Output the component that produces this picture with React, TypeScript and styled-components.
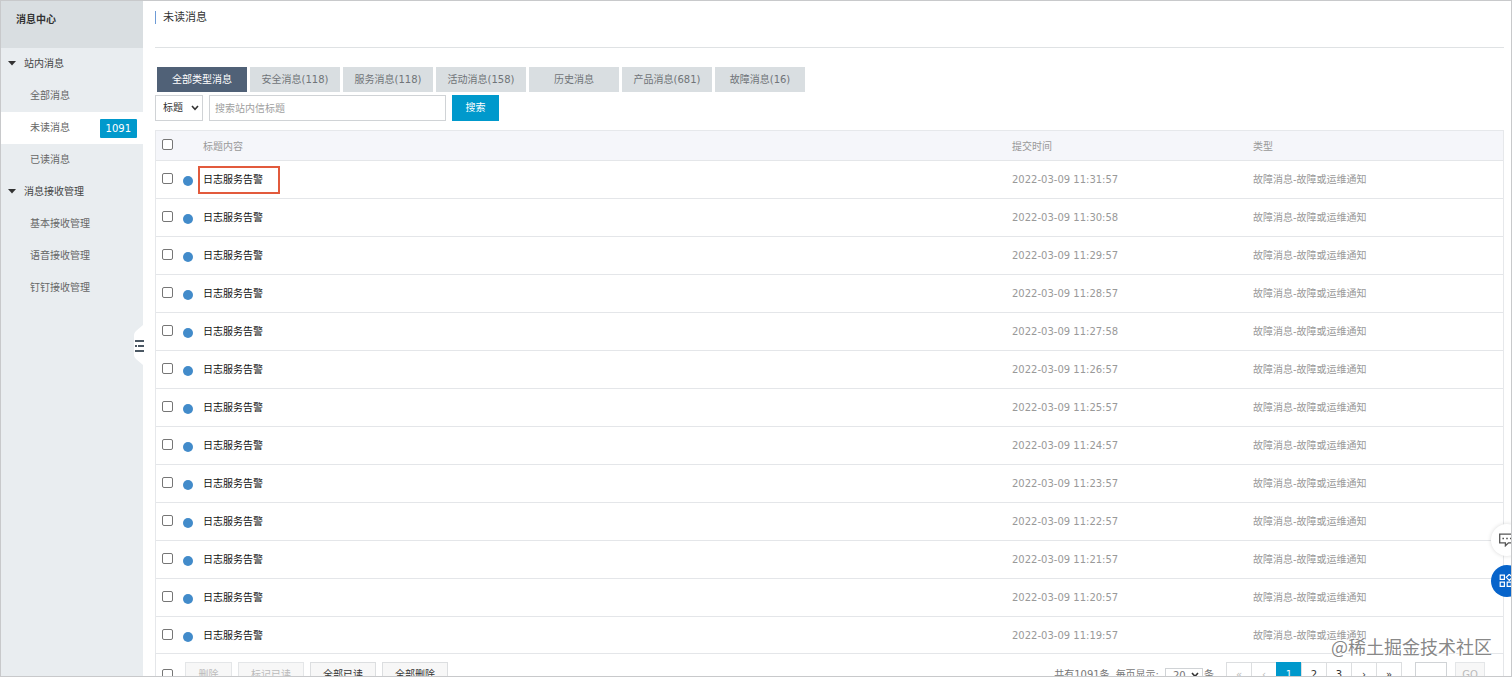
import React from 'react';
import styled, { createGlobalStyle } from 'styled-components';

const GlobalStyle = createGlobalStyle`
  * { box-sizing: border-box; }
  body {
    margin: 0;
    background: #fff;
    color: #333;
    font-family: "DejaVu Sans", "Noto Sans CJK SC", sans-serif;
    font-size: 10px;
    line-height: 16px;
  }
  button, input, select { font: inherit; color: inherit; margin: 0; border-radius: 0; }
`;

const Page = styled.div`
  display: flex;
  height: 100vh;
  border: 1px solid #c8c9cb;
  overflow: hidden;
  position: relative;
`;

const Sidebar = styled.aside`
  position: relative;
  flex: 0 0 142px;
  background: #e9edf0;
`;

const SidebarTitle = styled.h1`
  margin: 0;
  height: 47px;
  padding: 11px 15px;
  font-size: 10px;
  line-height: 16px;
  font-weight: 700;
  background: #d9dee1;
`;

const NavGroup = styled.button`
  display: flex;
  align-items: center;
  gap: 8px;
  width: 100%;
  height: 32px;
  padding: 0 0 0 7px;
  border: 0;
  background: none;
  color: #444;
  text-align: left;
`;

const NavItem = styled.a<{ $active?: boolean }>`
  display: flex;
  align-items: center;
  justify-content: space-between;
  height: 32px;
  padding: 0 6px 0 29px;
  color: #666;
  text-decoration: none;
  background: ${p => (p.$active ? '#fff' : 'transparent')};
`;

const Badge = styled.span`
  padding: 0 6px;
  line-height: 19px;
  border-radius: 1px;
  color: #fff;
  background: #0099cc;
`;

const Handle = styled.button`
  position: absolute;
  right: -2px;
  top: 324px;
  width: 11px;
  height: 40px;
  padding: 0;
  border: 0;
  background: none;
  svg { display: block; }
`;

const Main = styled.main`
  flex: 1;
  min-width: 0;
  display: flex;
  flex-direction: column;
  padding: 0 7px 0 12px;
`;

const Heading = styled.header`
  flex: 0 0 47px;
  padding-top: 10px;
  border-bottom: 1px solid #dfe2e4;
  h2 {
    margin: 0;
    padding-left: 7px;
    border-left: 1px solid #6d9bd6;
    font-size: 11px;
    line-height: 13px;
    font-weight: 400;
  }
`;

const Tabs = styled.nav`
  display: flex;
  gap: 3px;
  padding: 19px 0 0 2px;
`;

const Tab = styled.button<{ $active?: boolean }>`
  width: 90px;
  height: 25px;
  padding: 0;
  border: 0;
  white-space: nowrap;
  color: ${p => (p.$active ? '#fff' : '#707478')};
  background: ${p => (p.$active ? '#506177' : '#d9dee1')};
`;

const SearchForm = styled.form`
  display: flex;
  gap: 6px;
  padding: 3px 0 9px;
`;

const SelectBox = styled.span<{ $w: number; $h: number }>`
  position: relative;
  display: inline-block;
  width: ${p => p.$w}px;
  height: ${p => p.$h}px;
  select {
    display: block;
    appearance: none;
    width: 100%;
    height: 100%;
    padding: 0 0 0 7px;
    border: 1px solid #d0d3d6;
    background: #fff;
    line-height: 14px;
  }
  svg {
    position: absolute;
    right: 4px;
    top: calc(50% - 3px);
    pointer-events: none;
  }
`;

const SearchInput = styled.input`
  width: 237px;
  height: 26px;
  padding: 0 5px;
  border: 1px solid #d0d3d6;
  &::placeholder { color: #a0a0a0; }
`;

const SearchButton = styled.button`
  width: 47px;
  height: 26px;
  padding: 0;
  border: 0;
  color: #fff;
  background: #0099cc;
`;

const List = styled.div`
  flex: 1;
  min-height: 0;
  overflow: hidden;
  border: 1px solid #e6e8eb;
  border-bottom: 0;
`;

const Table = styled.table`
  width: 100%;
  border-collapse: separate;
  border-spacing: 0;
  table-layout: fixed;
  th, td {
    padding: 0;
    text-align: left;
    font-weight: 400;
    color: #999;
    vertical-align: middle;
    border-bottom: 1px solid #e4e6e9;
  }
  th { height: 30px; padding-top: 2px; background: #f5f6fa; }
  th:first-child { padding: 0 0 2px; }
  td { height: 38px; }
  td:first-child { padding-bottom: 2px; }
`;

const Col = styled.col<{ $w?: number }>`
  width: ${p => (p.$w ? `${p.$w}px` : 'auto')};
`;

const Check = styled.input.attrs({ type: 'checkbox' })`
  appearance: none;
  display: block;
  flex: none;
  width: 11px;
  height: 11px;
  margin-left: 6px;
  border: 1px solid #767676;
  border-radius: 2px;
  background: #fff;
  &:checked { background: #0099cc; }
`;

const Dot = styled.span`
  display: block;
  width: 10px;
  height: 10px;
  margin-top: 2px;
  border-radius: 50%;
  background: #428bca;
`;

const MessageLink = styled.a`
  position: relative;
  color: #111;
  text-decoration: none;
`;

const Highlight = styled.span`
  position: absolute;
  left: -5px;
  top: -8px;
  width: 82px;
  height: 28px;
  border: 2px solid #e25a3c;
`;

const Footer = styled.footer`
  flex: 0 0 23px;
  display: flex;
  align-items: flex-start;
  justify-content: space-between;
  padding: 8px 18px 0 0;
  border: 1px solid #e4e6e9;
  border-bottom: 0;
  overflow: hidden;
  white-space: nowrap;
`;

const FooterGroup = styled.div`
  display: flex;
  align-items: center;
  gap: 6px;
  height: 25px;
  color: #777;
`;

const ActionButton = styled.button<{ $w: number }>`
  width: ${p => p.$w}px;
  height: 25px;
  padding: 0;
  border: 1px solid #dcdee0;
  background: #f7f7f7;
  color: #333;
  &:disabled { color: #bbb; border-color: #e4e6e8; }
  ${Check} + & { margin-left: 6px; }
`;

const PageSize = styled.span`
  display: flex;
  align-items: center;
  gap: 1px;
`;

const Pager = styled.div`
  display: flex;
  margin: 0 8px 0 6px;
`;

const PageButton = styled.button<{ $active?: boolean }>`
  width: 26px;
  height: 25px;
  padding: 0;
  margin-right: -1px;
  border: 1px solid ${p => (p.$active ? '#0099cc' : '#dcdee0')};
  color: ${p => (p.$active ? '#fff' : '#333')};
  background: ${p => (p.$active ? '#0099cc' : '#fff')};
  &:disabled { color: #bbb; }
`;

const PageInput = styled.input`
  width: 32px;
  height: 25px;
  margin-right: 2px;
  border: 1px solid #d0d3d6;
`;

const FloatButton = styled.button<{ $top: number; $primary?: boolean }>`
  position: absolute;
  top: ${p => p.$top}px;
  right: -12px;
  width: 32px;
  height: 32px;
  padding: 0;
  border: 0;
  border-radius: 50%;
  background: ${p => (p.$primary ? '#0764cb' : '#fff')};
  box-shadow: ${p => (p.$primary ? 'none' : '0 0 4px rgba(0, 0, 0, 0.15)')};
  svg { display: block; margin: 9px 8px; }
`;

const Watermark = styled.div`
  position: absolute;
  right: 19px;
  bottom: 18px;
  font-family: "Noto Sans CJK SC", sans-serif;
  font-size: 18px;
  line-height: 24px;
  color: rgba(120, 120, 120, 0.9);
  text-shadow: 1px 1px 0 #fff, -1px -1px 0 #fff;
  pointer-events: none;
`;

const Caret = () => (
  <svg width="8" height="7" viewBox="0 0 8 7" aria-hidden="true">
    <path d="M0 0h8L4 4.5z" fill="#333" />
  </svg>
);

const Chevron = () => (
  <svg width="8" height="6" viewBox="0 0 8 6" aria-hidden="true">
    <path d="M1 1l3 3.3L7 1" fill="none" stroke="#333" strokeWidth="1.6" />
  </svg>
);

const tabs = ['全部类型消息', '安全消息(118)', '服务消息(118)', '活动消息(158)', '历史消息', '产品消息(681)', '故障消息(16)'];

const times = [
  '11:31:57', '11:30:58', '11:29:57', '11:28:57', '11:27:58', '11:26:57', '11:25:57',
  '11:24:57', '11:23:57', '11:22:57', '11:21:57', '11:20:57', '11:19:57',
];

const groups = [
  { name: '站内消息', items: ['全部消息', '未读消息', '已读消息'] },
  { name: '消息接收管理', items: ['基本接收管理', '语音接收管理', '钉钉接收管理'] },
];

const pages = ['«', '‹', '1', '2', '3', '›', '»'];

export default function App() {
  return (
    <Page>
      <GlobalStyle />
      <Sidebar>
        <SidebarTitle>消息中心</SidebarTitle>
        {groups.map(group => (
          <nav key={group.name} aria-label={group.name}>
            <NavGroup type="button"><Caret />{group.name}</NavGroup>
            {group.items.map(item => (
              <NavItem key={item} href="#" $active={item === '未读消息'}>
                {item}
                {item === '未读消息' && <Badge>1091</Badge>}
              </NavItem>
            ))}
          </nav>
        ))}
        <Handle type="button" aria-label="收起菜单">
          <svg width="11" height="40" viewBox="0 0 11 40">
            <path d="M9 0v40L2 34Q0 32 0 30V10Q0 8 2 6z" fill="#fff" />
            <path d="M1 16h9M1 21h2M4 21h6M1 26h9" stroke="#4b5864" strokeWidth="2" />
          </svg>
        </Handle>
      </Sidebar>

      <Main>
        <Heading><h2>未读消息</h2></Heading>
        <Tabs>
          {tabs.map((tab, i) => <Tab key={tab} type="button" $active={i === 0}>{tab}</Tab>)}
        </Tabs>
        <SearchForm onSubmit={e => e.preventDefault()}>
          <SelectBox $w={48} $h={26}>
            <select aria-label="搜索范围"><option>标题</option></select>
            <Chevron />
          </SelectBox>
          <SearchInput aria-label="搜索" placeholder="搜索站内信标题" />
          <SearchButton type="submit">搜索</SearchButton>
        </SearchForm>

        <List>
          <Table>
            <colgroup>
              <Col $w={27} /><Col $w={20} /><Col /><Col $w={241} /><Col $w={250} />
            </colgroup>
            <thead>
              <tr>
                <th><Check aria-label="全选" /></th>
                <th />
                <th>标题内容</th>
                <th>提交时间</th>
                <th>类型</th>
              </tr>
            </thead>
            <tbody>
              {times.map((time, i) => (
                <tr key={time}>
                  <td><Check aria-label={`选择 ${time}`} /></td>
                  <td><Dot /></td>
                  <td>
                    <MessageLink href="#">日志服务告警{i === 0 && <Highlight />}</MessageLink>
                  </td>
                  <td>2022-03-09 {time}</td>
                  <td>故障消息-故障或运维通知</td>
                </tr>
              ))}
            </tbody>
          </Table>
        </List>

        <Footer>
          <FooterGroup>
            <Check aria-label="全选本页" />
            <ActionButton type="button" $w={47} disabled>删除</ActionButton>
            <ActionButton type="button" $w={66} disabled>标记已读</ActionButton>
            <ActionButton type="button" $w={66}>全部已读</ActionButton>
            <ActionButton type="button" $w={66}>全部删除</ActionButton>
          </FooterGroup>
          <FooterGroup>
            <span>共有1091条</span>
            <label htmlFor="page-size">每页显示:</label>
            <PageSize>
              <SelectBox $w={38} $h={14}>
                <select id="page-size"><option>20</option></select>
                <Chevron />
              </SelectBox>
              条
            </PageSize>
            <Pager>
              {pages.map((page, i) => (
                <PageButton key={page} type="button" $active={page === '1'} disabled={i < 2}>{page}</PageButton>
              ))}
            </Pager>
            <PageInput aria-label="页码" />
            <ActionButton type="button" $w={30} disabled>GO</ActionButton>
          </FooterGroup>
        </Footer>
      </Main>

      <FloatButton type="button" $top={523} aria-label="在线咨询">
        <svg width="16" height="14" viewBox="0 0 16 14" fill="none" stroke="#555" strokeWidth="1.3">
          <path d="M.7 1.2h14.6v8.6H9.5L6.4 12.8V9.8H.7z" />
          <path d="M3.4 5.5h1.6M7.2 5.5h1.6M11 5.5h1.6" strokeWidth="1.4" />
        </svg>
      </FloatButton>
      <FloatButton type="button" $top={564} $primary aria-label="应用">
        <svg width="14" height="14" viewBox="0 0 14 14" fill="none" stroke="#fff" strokeWidth="1.2">
          <path d="M1.2 1.2h4.2v4.2H1.2zM1.2 8.2h4.2v4.2H1.2zM8.2 8.2h4.2v4.2H8.2zM10.3.3l3 3-3 3-3-3z" />
        </svg>
      </FloatButton>
      <Watermark>@稀土掘金技术社区</Watermark>
    </Page>
  );
}
